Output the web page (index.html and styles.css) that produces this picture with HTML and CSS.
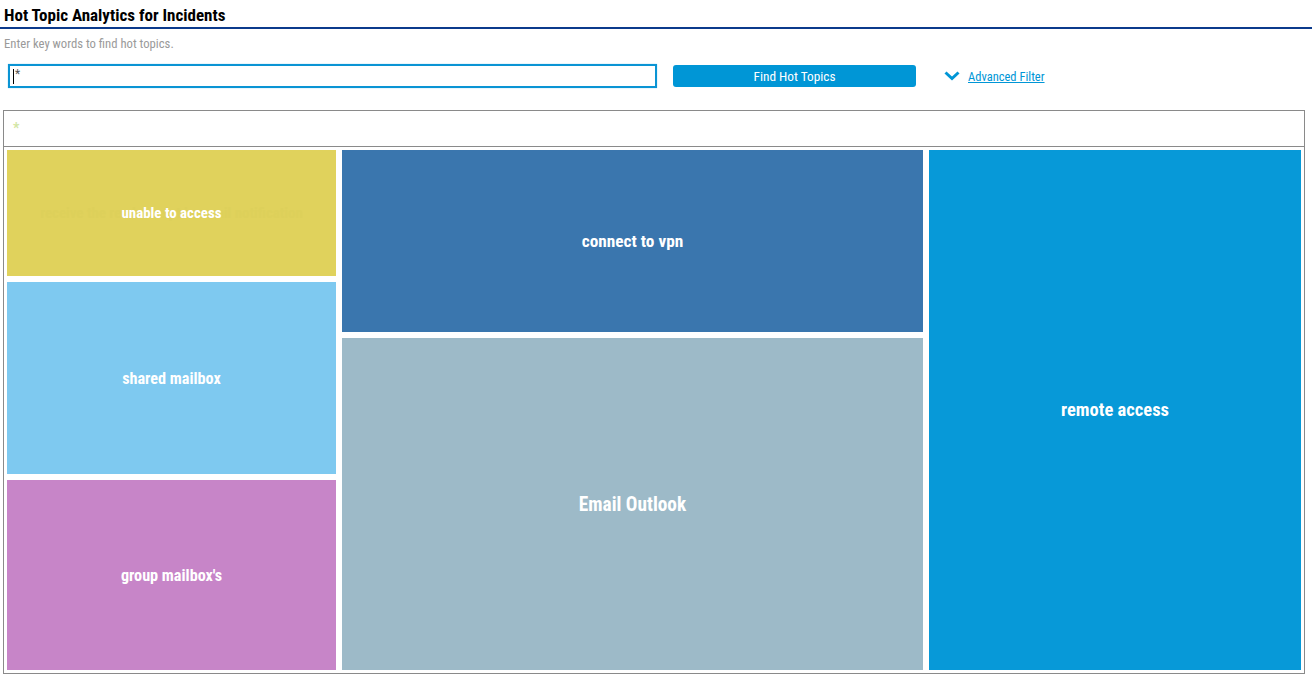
FILE: index.html
```html
<!DOCTYPE html>
<html>
<head>
<meta charset="utf-8">
<title>Hot Topic Analytics for Incidents</title>
<link rel="stylesheet" href="styles.css">
</head>
<body>
<div class="page">
  <h1 class="title">Hot Topic Analytics for Incidents</h1>
  <p class="hint">Enter key words to find hot topics.</p>
  <div class="search-row">
    <div class="search-box"><span class="caret"></span><span class="query">*</span></div>
    <button class="find-btn">Find Hot Topics</button>
    <a class="adv-filter" href="#">
      <svg class="chev" width="16" height="10" viewBox="0 0 16 10"><path d="M1.5 1.5 L8 7.5 L14.5 1.5" fill="none" stroke="#0096d6" stroke-width="3"/></svg>
      <span class="adv-text">Advanced Filter</span>
    </a>
  </div>
  <div class="panel">
    <div class="panel-head"><span class="star">*</span></div>
    <div class="treemap">
      <div class="col col1">
        <div class="tile yellow t1"><span class="ghost">receive the read receipt in email notification</span><span class="lbl s">unable to access</span></div>
        <div class="tile lightblue t2"><span class="lbl">shared mailbox</span></div>
        <div class="tile purple t3"><span class="lbl">group mailbox's</span></div>
      </div>
      <div class="col col2">
        <div class="tile steel t4"><span class="lbl m">connect to vpn</span></div>
        <div class="tile greyblue t5"><span class="lbl l">Email Outlook</span></div>
      </div>
      <div class="col col3">
        <div class="tile bright t6"><span class="lbl l2">remote access</span></div>
      </div>
    </div>
  </div>
</div>
</body>
</html>
```
FILE: styles.css
```css
html, body {
  margin: 0;
  padding: 0;
  background: #fff;
}
body {
  font-family: Roboto, "Liberation Sans", sans-serif;
  font-stretch: condensed;
  color: #000;
}
.page {
  width: 1312px;
}
.title {
  margin: 0;
  height: 27px;
  padding-left: 4px;
  font-size: 17px;
  line-height: 30px;
  font-weight: bold;
  border-bottom: 2px solid #0b3a8c;
  box-sizing: content-box;
}
.hint {
  margin: 0;
  padding: 7px 0 0 4px;
  height: 28px;
  font-size: 12.7px;
  line-height: 15px;
  color: #9a9a9a;
}
.search-row {
  display: flex;
  align-items: center;
  height: 24px;
  padding-left: 8px;
}
.search-box {
  width: 642px;
  height: 20px;
  border: 2px solid #0a94d4;
  box-shadow: 0 0 1px 0 #7fc6ea;
  display: flex;
  align-items: center;
  padding-left: 3px;
  background: #fff;
}
.caret {
  width: 1px;
  height: 15px;
  background: #000;
  margin-right: 1px;
}
.query {
  font-size: 12px;
  color: #555;
  line-height: 12px;
  margin-top: -4px;
}
.find-btn {
  margin-left: 16px;
  width: 243px;
  height: 22px;
  border: none;
  border-radius: 3px;
  background: #0096d6;
  color: #fff;
  font-family: inherit;
  font-stretch: inherit;
  font-size: 13.3px;
  padding: 0;
}
.adv-filter {
  margin-left: 28px;
  display: flex;
  align-items: center;
  text-decoration: none;
}
.chev {
  display: block;
  margin-right: 8px;
}
.adv-text {
  font-size: 12.5px;
  color: #0096d6;
  text-decoration: underline;
}
.panel {
  margin: 22px 0 0 3px;
  width: 1300px;
  border: 1px solid #8a8a8a;
}
.panel-head {
  height: 35px;
  border-bottom: 1px solid #8a8a8a;
  padding-left: 9px;
}
.star {
  display: inline-block;
  color: #d2e6a4;
  font-size: 14px;
  font-weight: bold;
  line-height: 14px;
  margin-top: 10px;
}
.treemap {
  display: flex;
  gap: 6px;
  padding: 3px;
  height: 520px;
}
.col {
  display: flex;
  flex-direction: column;
  gap: 6px;
}
.col1 { width: 329px; }
.col2 { width: 581px; }
.col3 { width: 372px; }
.tile {
  position: relative;
  display: flex;
  align-items: center;
  justify-content: center;
  color: #fff;
  font-weight: bold;
}
.t1 { height: 126px; }
.t2 { height: 192px; }
.t3 { height: 190px; }
.t4 { height: 182px; }
.t5 { height: 332px; }
.t6 { height: 520px; }
.yellow { background: #e0d25c; }
.lightblue { background: #7ec9f0; }
.purple { background: #c785c8; }
.steel { background: #3a76ae; }
.greyblue { background: #9dbac8; }
.bright { background: #0799d8; }
.lbl {
  position: relative;
  font-size: 16.2px;
  white-space: nowrap;
}
.lbl.s { font-size: 14.9px; }
.lbl.m { font-size: 17.3px; }
.lbl.l { font-size: 19.3px; }
.lbl.l2 { font-size: 18.5px; }
.ghost {
  position: absolute;
  left: 0;
  right: 0;
  text-align: center;
  font-size: 14.9px;
  color: #ddd05a;
  white-space: nowrap;
}
```
